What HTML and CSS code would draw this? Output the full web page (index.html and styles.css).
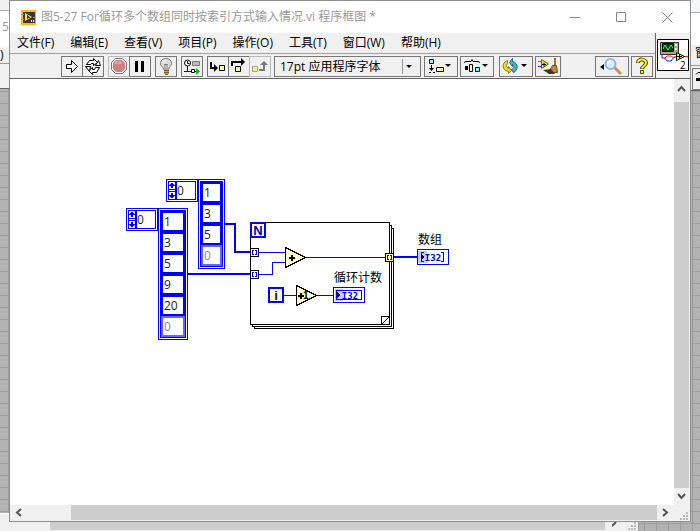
FILE: index.html
```html
<!DOCTYPE html>
<html lang="zh-CN">
<head>
<meta charset="utf-8">
<meta name="viewport" content="width=device-width, initial-scale=1">
<title>图5-27 For循环多个数组同时按索引方式输入情况.vi 程序框图</title>
<link rel="stylesheet" href="styles.css">
</head>
<body>
<div class="desktop">
  <div class="side side-left" aria-hidden="true">
    <div class="side-top"></div>
    <div class="side-title">5</div>
    <div class="side-menu">)</div>
    <div class="side-tools"></div>
    <div class="side-grid"></div>
    <div class="side-foot"></div>
  </div>

  <main class="window">
    <header class="titlebar">
      <svg class="app-icon" width="15" height="15" viewBox="0 0 15 15"><path fill="#fdb813" d="M0 0h15v15H0z"/><path fill="#3a3a35" d="M2 2h12v11H2z"/><path fill="#ffd95a" d="M4 3l7 4-7 4z"/><path fill="#3a3a35" d="M6 5h1v1h1v1h1v1H7v1H6z"/><path fill="#5ba1d8" d="M0 4h3v1H0zM0 9h3v1H0zM12 7h3v1h-3z"/><path fill="#eee" d="M10 10h1v2h-1zM12 10h1v2h-1z"/></svg>
      <h1 class="title">图5-27 For循环多个数组同时按索引方式输入情况.vi 程序框图 *</h1>
      <div class="caption-buttons">
        <button class="caption" aria-label="最小化"><svg width="11" height="11" viewBox="0 0 11 11"><path d="M0 5.500h10"/></svg></button>
        <button class="caption" aria-label="最大化"><svg width="11" height="11" viewBox="0 0 11 11"><path d="M.5.5h9v9h-9z"/></svg></button>
        <button class="caption" aria-label="关闭"><svg width="11" height="11" viewBox="0 0 11 11"><path d="M.5.5l10 10M10.500.5l-10 10"/></svg></button>
      </div>
    </header>

    <div class="command-area">
      <div class="commands">
        <nav class="menubar">
          <button>文件(F)</button><button>编辑(E)</button><button>查看(V)</button><button>项目(P)</button><button>操作(O)</button><button>工具(T)</button><button>窗口(W)</button><button>帮助(H)</button>
        </nav>
        <div class="toolbar">
          <div class="group">
            <button class="tool" aria-label="运行"><svg width="20" height="19" viewBox="0 0 20 19"><path fill="#fff" stroke="#000" d="M4.500 7.500h5v-4l6 6-6 6v-4h-5z"/></svg></button>
            <button class="tool" aria-label="连续运行"><svg width="20" height="19" viewBox="0 0 20 19"><path fill="#fff" stroke="#000" d="M3.500 7.500l3-4h4v-2l4 4-4 3v-2h-2l-1 1zM16.500 10.500l-3 5h-4v2l-4-4 4-3v2h2l1-2z"/><path fill="#fff" stroke="#000" d="M2.500 9.500h5l-1 5zM12.500 8.500h5l-2-5z"/></svg></button>
          </div>
          <div class="group">
            <button class="tool tool-off" aria-label="中止执行"><svg width="20" height="19" viewBox="0 0 20 19"><path fill="#fff" stroke="#777" d="M6.500 1.500h7l4 4v7l-4 4h-7l-4-4v-7z"/><path fill="#cd8181" d="M7 3h6l3 3v6l-3 3H7l-3-3V6z"/><path fill="#dca3a3" d="M7 4h5l2 3H5z"/></svg></button>
            <button class="tool" aria-label="暂停"><svg width="20" height="19" viewBox="0 0 20 19"><path d="M5 4h3v11H5zM11 4h3v11h-3z"/></svg></button>
          </div>
          <button class="tool" aria-label="高亮显示执行过程"><svg width="20" height="19" viewBox="0 0 20 19"><path fill="#ddd" stroke="#777" d="M7.500 12.500c0-3-3-3-3-6s2-5 5.500-5 5.500 2 5.500 5-3 3-3 6z"/><path fill="none" stroke="#fff" d="M7 6c0-2 1-3 3-3"/><path fill="none" stroke="#888" d="M8 7l1 1 1-1 1 1 1-1M9 8v4M11 8v4"/><path fill="#c9a24a" d="M8 12h5v5H8z"/><path stroke="#756025" d="M8 13.500h5M8 15.500h5M9 17.500h3"/></svg></button>
          <button class="tool" aria-label="保存连线值"><svg width="20" height="19" viewBox="0 0 20 19"><circle cx="5.500" cy="6" r="3" fill="#fff" stroke="#000"/><path fill="none" stroke="#000" d="M5.500 4v2.500h2M5.500 9v5"/><path fill="#bbb" stroke="#777" d="M10.500 4.500h7v4h-7z"/><path stroke="#00f" d="M2 14.500h14"/><path fill="#fff" stroke="#000" d="M9.500 12.500h3v3h-3z"/><path fill="#00b000" d="M14 11l4 3.500-4 3.500z"/></svg></button>
          <div class="group">
            <button class="tool" aria-label="单步步入"><svg width="20" height="19" viewBox="0 0 20 19"><path fill="none" stroke="#000" stroke-width="2" d="M3 5v6h4"/><path d="M6 7l4 4-4 4z"/><path fill="#ffff99" stroke="#000" d="M11.500 8.500h5v5h-5z"/></svg></button>
            <button class="tool" aria-label="单步步过"><svg width="20" height="19" viewBox="0 0 20 19"><path fill="none" stroke="#000" stroke-width="2" d="M3 9V5h10"/><path d="M12 1l4 4-4 4z"/><path fill="#ffff99" stroke="#000" d="M6.500 9.500h5v5h-5z"/></svg></button>
            <button class="tool tool-off" aria-label="单步步出"><svg width="20" height="19" viewBox="0 0 20 19"><path fill="none" stroke="#777" stroke-width="2" d="M9 13h5V7"/><path fill="#777" d="M10 8l4-4 4 4z"/><path fill="#f2eda0" stroke="#aaa56a" d="M2.500 9.500h5v5h-5z"/></svg></button>
          </div>
          <div class="font-picker">
            <select aria-label="文本设置"><option>17pt 应用程序字体</option></select>
            <svg width="14" height="15" viewBox="0 0 14 15"><path stroke="#999" d="M.5 0v15"/><path d="M4 6h6L7 9z"/></svg>
          </div>
          <button class="tool tool-wide tool-align" aria-label="对齐对象"><svg width="32" height="19" viewBox="0 0 32 19"><path fill="#8ff" stroke="#000" d="M4.500 2.500h4v4h-4z"/><path stroke="#000" d="M6.500 8v4M4 15.500h2M8 15.500h2"/><path d="M4 11h5l-2.500 3z"/><path fill="#ffff99" stroke="#000" d="M11.500 10.500h7v4h-7z"/><path d="M20 7h6l-3 3z"/></svg></button>
          <button class="tool tool-wide" aria-label="分布对象"><svg width="32" height="19" viewBox="0 0 32 19"><path fill="none" stroke="#000" d="M3 5.500l2-1h5l1-2 1 2h5l2 1"/><path d="M4 9h3v4H4z"/><path fill="#ffff99" stroke="#000" d="M8.500 7.500h3v7h-3z"/><path fill="#8ff" stroke="#000" d="M14.500 10.500h4v4h-4z"/><path d="M21 7h6l-3 3z"/></svg></button>
          <button class="tool tool-wide tool-apart" aria-label="重新排序"><svg width="32" height="19" viewBox="0 0 32 19"><path fill="#e6dc25" stroke="#817b13" d="M7.500 3.500v3c-2 2-1 4 1 5v-2l3 4-3 3v-2c-7-1-7-9-1-11z"/><path fill="#4db0c9" stroke="#256578" d="M12.500 1.500v3c6 1 6 9 1 11l-2-3c3-1 3-4 1-5v2l-3-4z"/><path d="M21 7h6l-3 3z"/></svg></button>
          <button class="tool tool-clean" aria-label="整理程序框图"><svg width="24" height="19" viewBox="0 0 24 19"><path stroke="#e33" d="M2 4.500h4"/><path stroke="#22f" d="M2 9.500h4"/><path fill="#ffef37" stroke="#685f00" d="M5.500 2.500l7 4.500-7 4.500z"/><path stroke="#000" d="M6 7.500h4M8 5.500v4"/><path stroke="#a36f30" stroke-width="2" d="M19 1v8"/><path fill="#b98a49" stroke="#745020" d="M16.500 8.500h4l1 7h-9z"/><path fill="#49351e" d="M7 13l8-1 4 5H13z"/></svg></button>
          <button class="tool tool-wide tool-search" aria-label="搜索"><svg width="32" height="19" viewBox="0 0 32 19"><path d="M4 10l4-3v6z"/><path stroke="#d78a56" stroke-width="3" d="M18 10l7 7"/><circle cx="14.500" cy="7" r="5" fill="#d6efff" stroke="#8eb4df" stroke-width="2"/><path stroke="#fff" stroke-width="2" d="M12 7c0-2 1-3 3-3" fill="none"/></svg></button>
          <button class="tool" aria-label="显示即时帮助"><svg width="20" height="19" viewBox="0 0 20 19"><path fill="none" stroke="#4d4900" stroke-width="4" d="M6 6c0-5 8-4 8 0 0 3-4 3-4 6"/><path fill="none" stroke="#ffef22" stroke-width="2" d="M6 5.500c0-4.500 8-3.500 8 .5 0 3-4 3-4 5.500"/><path fill="#ffef22" stroke="#4d4900" d="M8.500 13.500h3v3h-3z"/></svg></button>
        </div>
      </div>
      <div class="vi-panel">
        <svg width="32" height="32" viewBox="0 0 32 32" role="img" aria-label="VI 图标 2"><path fill="#fff" stroke="#000" d="M.5.5h31v31H.5z"/><path fill="#aaa78b" stroke="#333" d="M3.500 3.500h18v12h-18z"/><path fill="#153b18" stroke="#000" d="M5.500 4.500h11v8h-11z"/><path fill="none" stroke="#3dfc50" d="M6 10l2-4 3 5 3-5 2 3"/><path fill="#eee" d="M18 5h2v2h-2zM18 9h2v2h-2z"/><path fill="none" stroke="#22f" d="M5 16v3h3l2 3h4l3-4h3"/><path fill="none" stroke="#f22" d="M7 20l3-3h4l3 2 3-3M27 17.500h4"/><path fill="#ffef37" stroke="#000" d="M19.500 13.500l8 4-8 4z"/><path stroke="#000" d="M20 17.500h5M22.500 15v5"/><text class="vi-number" x="23" y="30">2</text></svg>
      </div>
    </div>

    <div class="workspace">
      <section class="canvas" aria-label="程序框图">
        <svg class="wires" width="460" height="270" viewBox="10 79 460 270">
          <g fill="#fff" stroke="#000">
            <path d="M254.500 228.500h139v100h-139z"/><path d="M252.500 225.500h139v101h-139z"/><path d="M250.500 222.500h139v102h-139z"/>
            <path d="M381.500 324.500v-8h8z"/>
          </g>
          <g fill="none" stroke="#00f">
            <path stroke-width="2" d="M225 224h10v28h15M188 274h62M394 257h23"/>
            <path d="M258 252.500h27M258 274.500h14.500v-12H285M306 257.500h80M284 295.500h12M317 295.500h16"/>
          </g>
          <g fill="#ffffce" stroke="#000">
            <path d="M250.500 248.500h8v8h-8zM250.500 270.500h8v8h-8zM385.500 253.500h8v8h-8z"/>
            <path d="M285.500 247.500l20 10-20 10zM296.500 285.500l20 10-20 10z"/>
          </g>
          <path fill="none" stroke="#00f" d="M254 250.500h-1.500v4H254M255 250.500h1.500v4H255M254 272.500h-1.500v4H254M255 272.500h1.500v4H255M389 255.500h-1.500v4H389M390 255.500h1.500v4H390"/>
          <path fill="none" stroke="#000" stroke-width="2" d="M289 258h6M292 255v6M298 296h6M301 293v6"/>
          <text class="op" x="303" y="299">1</text>
          <g fill="#ffffce" stroke="#00f" stroke-width="2"><path d="M251 223h14v14h-14zM269 288h14v14h-14z"/></g>
          <text class="terminal" x="258" y="235">N</text>
          <text class="terminal" x="276" y="300">i</text>
          <g fill="#fff" stroke="#00f"><path d="M417.500 249.500h31v15h-31zM333.500 287.500h31v15h-31z"/></g>
          <path fill="#c5c5ff" d="M418 251h9v12h-9zM335 289h8v12h-8z"/>
          <path fill="none" stroke="#00f" d="M336.500 290.500h25v9h-25zM424 252.500h-2.500v9h2.500M441 252.500h2.500v9H441"/>
          <path d="M421 254l4 3-4 3zM337 292l4 3-4 3z"/>
          <text class="type" x="433" y="261">I32</text><text class="type" x="350" y="299">I32</text>
          <text class="label" x="418" y="244">数组</text><text class="label" x="334" y="282">循环计数</text>
        </svg>

        <div class="array array-upper">
          <div class="index"><svg width="8" height="19" viewBox="0 0 8 19"><path fill="#00f" d="M0 0h8v19H0z"/><path fill="#fff" d="M1 1h6v7H1zM1 11h6v7H1z"/><path fill="#00f" d="M3 2h2v1h1v1h1v1H5v2H3V5H1V4h1V3h1zM3 17h2v-1h1v-1h1v-1H5v-2H3v2H1v1h1v1h1z"/><path fill="#fff" d="M1 9h6v1H1z"/></svg><input aria-label="索引" value="0"></div>
          <div class="cells"><input aria-label="元素 0" value="1"><input aria-label="元素 1" value="3"><input aria-label="元素 2" value="5"><input class="unset" aria-label="元素 3" value="0"></div>
        </div>
        <div class="array array-lower">
          <div class="index"><svg width="8" height="19" viewBox="0 0 8 19"><path fill="#00f" d="M0 0h8v19H0z"/><path fill="#fff" d="M1 1h6v7H1zM1 11h6v7H1z"/><path fill="#00f" d="M3 2h2v1h1v1h1v1H5v2H3V5H1V4h1V3h1zM3 17h2v-1h1v-1h1v-1H5v-2H3v2H1v1h1v1h1z"/><path fill="#fff" d="M1 9h6v1H1z"/></svg><input aria-label="索引" value="0"></div>
          <div class="cells cells-wide"><input aria-label="元素 0" value="1"><input aria-label="元素 1" value="3"><input aria-label="元素 2" value="5"><input aria-label="元素 3" value="9"><input aria-label="元素 4" value="20"><input class="unset" aria-label="元素 5" value="0"></div>
        </div>
      </section>
      <div class="vscroll">
        <button aria-label="向上滚动"><svg width="9" height="7" viewBox="0 0 9 7"><path d="M1 6l3.500-4L8 6"/></svg></button>
        <div class="thumb"></div>
        <button aria-label="向下滚动"><svg width="9" height="7" viewBox="0 0 9 7"><path d="M1 1l3.500 4L8 1"/></svg></button>
      </div>
    </div>
    <div class="hscroll">
      <button aria-label="向左滚动"><svg width="7" height="9" viewBox="0 0 7 9"><path d="M6 1L2 4.500 6 8"/></svg></button>
      <div class="thumb"></div>
      <button class="scroll-right" aria-label="向右滚动"><svg width="7" height="9" viewBox="0 0 7 9"><path d="M1 1l4 3.500L1 8"/></svg></button>
      <svg class="grip" width="8" height="8" viewBox="0 0 8 8"><path fill="#bbb" d="M6 0h2v2H6zM3 3h2v2H3zM6 3h2v2H6zM0 6h2v2H0zM3 6h2v2H3zM6 6h2v2H6z"/></svg>
    </div>
  </main>

  <div class="side side-right" aria-hidden="true">
    <div class="side-top"></div>
    <div class="side-title"></div>
    <div class="side-menu">窗</div>
    <div class="side-tools"><svg width="8" height="22" viewBox="0 0 8 22"><path fill="none" stroke="#777" d="M8 .5H.5v21H8"/><path fill="none" stroke="#000" d="M4 6.500l2-2h2"/><path d="M4 10h4v3H4z"/></svg></div>
    <div class="side-grid"></div>
  </div>

  <div class="back-bottom" aria-hidden="true">
    <div class="back-start"></div>
    <div class="back-thumb"></div>
    <div class="back-end"><svg width="28" height="8" viewBox="0 0 28 8"><path fill="none" stroke="#555" stroke-width="2" d="M0 4l4-4"/><path fill="#bbb" d="M22 0h2v2h-2zM19 3h2v2h-2zM22 3h2v2h-2zM16 6h2v2h-2zM19 6h2v2h-2zM22 6h2v2h-2z"/></svg></div>
  </div>
</div>
</body>
</html>
```

FILE: styles.css
```css
* { box-sizing: border-box; }

body {
  margin: 0;
  overflow: hidden;
  font: 12px/16px "Open Sans", "Noto Sans CJK SC", sans-serif;
  color: #000;
}

svg { display: block; flex: none; }

button {
  padding: 0;
  border: 0;
  background: none;
  font: inherit;
  color: inherit;
}

.desktop {
  display: grid;
  grid-template-columns: 9px minmax(0, 1fr) 9px;
  grid-template-rows: minmax(0, 1fr) 9px;
  height: 100vh;
  background-color: #b3b3b3;
  background-image: linear-gradient(#9c9c9c 1px, transparent 1px), linear-gradient(90deg, #9c9c9c 1px, transparent 1px);
  background-size: 12px 12px;
  background-position: 8px 7px;
}

.window {
  display: flex;
  flex-direction: column;
  border: 1px solid #8f8f8f;
  background: #fff;
}

/* Title bar */
.titlebar {
  display: flex;
  align-items: center;
  height: 32px;
  padding-left: 11px;
}

.title {
  flex: 1;
  margin: 0 0 0 5px;
  font-size: 12px;
  font-weight: 400;
  color: #999;
  white-space: nowrap;
}

.caption-buttons { display: flex; }

.caption {
  display: grid;
  place-items: center;
  width: 46px;
  height: 30px;
}

.caption svg { fill: none; stroke: #888; }

/* Menus and tools */
.command-area {
  display: flex;
  height: 46px;
  background: #f0f0f0;
  border-bottom: 1px solid #646464;
}

.commands { flex: 1; }

.menubar {
  display: flex;
  gap: 16px;
  height: 21px;
  padding-left: 7px;
  border-bottom: 1px solid #a0a0a0;
}

.menubar button { white-space: nowrap; }

.toolbar {
  display: flex;
  gap: 4px;
  padding: 2px 2px 0 51px;
}

.group { display: flex; }
.group .tool + .tool { margin-left: -1px; }

.tool {
  display: grid;
  place-items: center;
  width: 22px;
  height: 21px;
  border: 1px solid #777;
}

.tool-off { border-color: #bbb; }
.tool-wide { width: 34px; }
.toolbar .tool-align { margin-left: -1px; }
.tool-wide + .tool-wide { margin-left: -2px; }
.toolbar .tool-apart { margin-left: 1px; }
.tool-clean { width: 26px; margin-left: -2px; }
.toolbar .tool-search { margin-left: auto; }
.tool-search + .tool { margin-left: -2px; }

.font-picker {
  display: flex;
  align-items: center;
  width: 147px;
  height: 21px;
  margin-left: -1px;
  border: 1px solid #777;
  padding-right: 4px;
}

.font-picker select {
  flex: 1;
  min-width: 0;
  appearance: none;
  border: 0;
  background: none;
  padding: 0 0 0 5px;
  font: inherit;
  color: inherit;
}

.vi-panel {
  width: 35px;
  padding: 6px 0 0 1px;
  border-left: 1px solid #646464;
}

.vi-number { font: 10px "Open Sans", sans-serif; }

/* Block diagram */
.workspace { display: flex; flex: 1; min-height: 0; }

.canvas {
  position: relative;
  flex: 1;
  overflow: hidden;
}

.wires { shape-rendering: crispEdges; }

.terminal {
  font: bold 13px "Liberation Sans", sans-serif;
  fill: #00c;
  text-anchor: middle;
}

.type {
  font: bold 9px "DejaVu Sans Mono", monospace;
  fill: #00c;
  text-anchor: middle;
}

.op { font: bold 10px "Liberation Sans", sans-serif; }
.label { font: 12px "Noto Sans CJK SC", sans-serif; }

.array {
  position: absolute;
  display: flex;
  align-items: flex-start;
}

.array-upper { left: 156px; top: 100px; }
.array-lower { left: 116px; top: 129px; }

.index {
  display: flex;
  width: 32px;
  padding: 1px;
  border: 1px solid #00f;
}

.index svg { shape-rendering: crispEdges; }

.array input {
  width: 100%;
  min-width: 0;
  margin: 0;
  background: #fff;
  font: 12px/16px "Open Sans", sans-serif;
  color: #222;
}

.index input {
  height: 19px;
  padding: 0;
  border: 1px solid #00f;
}

.cells {
  display: flex;
  flex-direction: column;
  width: 27px;
  padding: 2px;
  border: 1px solid #00f;
}

.cells-wide { width: 30px; }

.cells input {
  height: 21px;
  padding: 0 0 0 1px;
  border: 2px solid #00f;
  outline: 1px solid #00f;
}

.cells .unset {
  border-color: #66f;
  color: #888;
}

/* Scroll bars */
.vscroll {
  display: flex;
  flex-direction: column;
  width: 16px;
  padding-right: 1px;
  background: #f0f0f0;
}

.vscroll button, .hscroll button { display: grid; place-items: center; }
.vscroll button { height: 17px; }
.vscroll button:first-child { height: 23px; padding-bottom: 5px; }
.thumb { flex: 1; background: #cdcdcd; }
.vscroll svg, .hscroll button svg { fill: none; stroke: #555; stroke-width: 2; }

.hscroll {
  display: flex;
  height: 16px;
  padding-bottom: 1px;
  background: #f0f0f0;
}

.hscroll button { width: 16px; }
.hscroll button:first-child { margin-right: 45px; }
.grip { align-self: flex-end; margin: 0 2px 0 7px; }

/* Edges of the windows behind */
.side {
  display: flex;
  flex-direction: column;
  overflow: hidden;
}

.side-top { height: 11px; background: #f0f0f0; border-bottom: 1px solid #aaa; }
.side-title { height: 36px; padding: 8px 0 0 2px; background: #fff; color: #999; }
.side-menu { height: 17px; background: #f0f0f0; border-bottom: 1px solid #999; }
.side-tools { height: 25px; background: #f0f0f0; border-bottom: 1px solid #646464; }
.side-grid { flex: 1; }
.side-foot { height: 9px; background: #f0f0f0; border-top: 1px solid #fff; }
.side-right .side-top { height: 13px; background: #f4f6fa; }
.side-right .side-title { height: 32px; }
.side-right .side-menu { height: 21px; padding-left: 4px; }
.side-right .side-tools { padding: 2px 0 0 1px; }

.back-bottom {
  grid-column: 1 / -1;
  display: flex;
}

.back-start { width: 50px; background: #f0f0f0; }
.back-thumb { flex: 1; background: #cdcdcd; border-bottom: 1px solid #f0f0f0; }

.back-end {
  width: 34px;
  margin-right: 61px;
  padding-left: 7px;
  background: #f0f0f0;
  border-right: 1px solid #999;
}
```
